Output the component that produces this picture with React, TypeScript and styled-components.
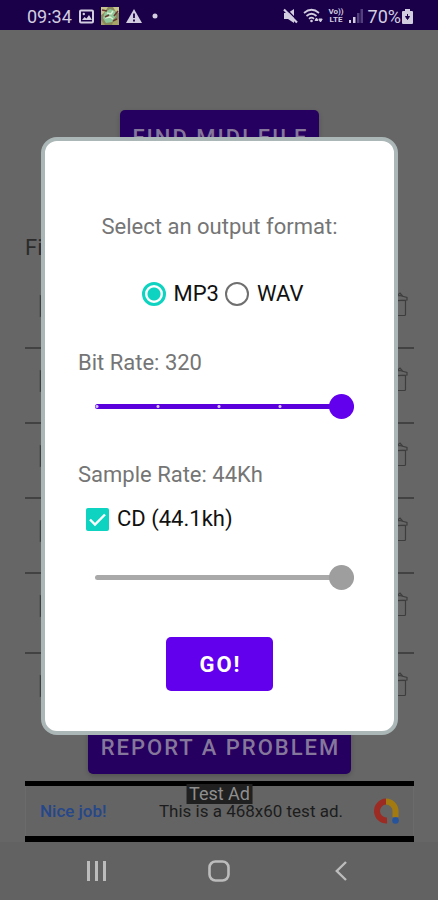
import React, { useState } from "react";
import styled, { createGlobalStyle } from "styled-components";

const GlobalStyle = createGlobalStyle`
  *, *::before, *::after { box-sizing: border-box; }
  body { margin: 0; background: #666; }
  body, button, input { font-family: Roboto, "Liberation Sans", sans-serif; }
`;

const Screen = styled.div`
  min-height: 100vh;
  display: flex;
  flex-direction: column;
  background: #666;
`;

const StatusBar = styled.header`
  height: 30px;
  padding: 2px 25px 0 27px;
  display: flex;
  align-items: center;
  justify-content: space-between;
  background: #190049;
  color: #d3cde0;
  font-size: 18px;
`;

const StatusGroup = styled.div<{ $gap: number }>`
  display: flex;
  align-items: center;
  gap: ${(p) => p.$gap}px;
  svg { display: block; }
`;

const Main = styled.main`
  flex: 1;
  position: relative;
  padding: 80px 24px 0 25px;
  display: flex;
  flex-direction: column;
  align-items: center;
`;

const DimButton = styled.button`
  height: 54px;
  padding: 0 11px 0 13px;
  border: 0;
  border-radius: 5px;
  background: #260060;
  color: #85779b;
  font-size: 22px;
  font-weight: 500;
  letter-spacing: 2px;
  white-space: nowrap;
  box-shadow: 0 2px 5px rgba(0, 0, 0, 0.2);
`;

const FilesHeading = styled.h2`
  align-self: stretch;
  margin: 72px 0 14px;
  font-size: 22px;
  font-weight: 400;
  line-height: 24px;
  color: #2b2b2b;
`;

const FileList = styled.ul`
  align-self: stretch;
  flex: 1;
  margin: 0;
  padding: 0;
  list-style: none;
`;

const FileRow = styled.li<{ $tall?: boolean }>`
  height: ${(p) => (p.$tall ? 80 : 75)}px;
  padding: 18px 6px 0 14px;
  display: flex;
  align-items: flex-start;
  justify-content: space-between;
  border-bottom: 2px solid #424242;
  &:last-child { height: 66px; border-bottom: 0; }
`;

const RowButton = styled.button`
  width: 20px;
  height: 26px;
  padding: 0;
  border: 0;
  background: none;
  color: #3d3d3d;
  svg { display: block; }
`;

const AdBanner = styled.aside`
  align-self: stretch;
  position: relative;
  height: 61px;
  margin-top: 7px;
  padding: 0 15px;
  display: flex;
  align-items: center;
  border: solid #000;
  border-width: 5px 0 6px;
  background: #646464;
  box-shadow: inset 1px 0 #6b6b6b, inset -1px 0 #6b6b6b;
  font-size: 17px;
  line-height: 16px;
  color: #1c1c1c;
  svg { display: block; }
`;

const AdLink = styled.a`
  color: #26478a;
  font-weight: 500;
  text-decoration: none;
`;

const AdText = styled.span`
  margin: 0 30px 0 auto;
`;

const AdTag = styled.span`
  position: absolute;
  top: -2px;
  left: 50%;
  transform: translateX(-50%);
  height: 20px;
  padding: 0 3px;
  background: #202020;
  color: #8e8e8e;
  font-size: 18px;
  line-height: 20px;
  white-space: nowrap;
`;

const Overlay = styled.div`
  position: absolute;
  inset: 0;
  padding: 0 40px 0 41px;
  display: grid;
  align-items: center;
`;

const Dialog = styled.form`
  padding: 72px 33px 40px;
  display: flex;
  flex-direction: column;
  border: 4px solid #abb6b6;
  border-radius: 16px;
  background: #fff;
`;

const FormatGroup = styled.fieldset`
  margin: 0;
  padding: 0;
  border: 0;
`;

const FormatLegend = styled.legend`
  width: 100%;
  margin-bottom: 39px;
  padding: 0;
  text-align: center;
  font-size: 22px;
  line-height: 28px;
  color: #757575;
`;

const FormatChoices = styled.div`
  display: flex;
  justify-content: center;
  gap: 6px;
  padding-left: 6px;
`;

const Choice = styled.label`
  display: flex;
  align-items: center;
  gap: 8px;
  font-size: 22px;
  line-height: 28px;
  color: #111;
`;

const Radio = styled.input`
  appearance: none;
  width: 24px;
  height: 24px;
  margin: 0;
  border: 2px solid #6f6f6f;
  border-radius: 50%;
  &:checked {
    border: 3px solid #0fd3c1;
    background: radial-gradient(circle, #0fd3c1 6px, #fff 7px);
  }
`;

const Field = styled.section`
  display: flex;
  flex-direction: column;
`;

const FieldLabel = styled.label`
  font-size: 22px;
  line-height: 28px;
  color: #757575;
`;

const BitRateField = styled(Field)`
  margin-top: 41px;
  gap: 16px;
`;

const SampleRateField = styled(Field)`
  margin-top: 42px;
`;

const CdChoice = styled(Choice)`
  margin: 16px 0 31px 8px;
`;

const CheckWrap = styled.span`
  display: grid;
  width: 23px;
  height: 23px;
  > * { grid-area: 1 / 1; }
`;

const Checkbox = styled.input`
  appearance: none;
  width: 23px;
  height: 23px;
  margin: 0;
  border: 2px solid #6f6f6f;
  border-radius: 2px;
  &:checked { border: 0; background: #0fd3c1; }
  & + svg { visibility: hidden; pointer-events: none; }
  &:checked + svg { visibility: visible; }
`;

const tick = (at: string) =>
  `radial-gradient(circle at ${at} 50%, #d9c6ff 1px, transparent 2px)`;

const Slider = styled.input<{ $color: string; $track: string; $ticks?: boolean }>`
  appearance: none;
  height: 26px;
  margin: 0 7px 0 17px;
  background: none;
  &::-webkit-slider-runnable-track {
    height: 5px;
    border-radius: 3px;
    background: ${(p) =>
      p.$ticks
        ? `${["2px", "63px", "124px", "185px"].map(tick).join(", ")}, ${p.$track}`
        : p.$track};
  }
  &::-webkit-slider-thumb {
    appearance: none;
    width: 25px;
    height: 25px;
    margin-top: -10px;
    border: 0;
    border-radius: 50%;
    background: ${(p) => p.$color};
  }
`;

const GoButton = styled.button`
  align-self: center;
  height: 54px;
  margin-top: 47px;
  padding: 0 31px 0 33px;
  border: 0;
  border-radius: 5px;
  background: #6200ee;
  color: #fff;
  font-size: 22px;
  font-weight: 700;
  letter-spacing: 2px;
`;

const NavBar = styled.nav`
  height: 58px;
  padding: 0 36px;
  display: grid;
  grid-template-columns: repeat(3, 1fr);
  background: #626262;
`;

const NavButton = styled.button`
  display: grid;
  place-items: center;
  padding: 0;
  border: 0;
  background: none;
  color: #bcbcbc;
`;

const PictureIcon = () => (
  <svg width="15" height="15" viewBox="0 0 15 15">
    <rect x="1" y="1.500" width="13" height="12" rx="1" fill="none" stroke="#d3cde0" strokeWidth="2" />
    <path d="M3 11l2.500-3 2 1.500 2.500-3.500 3 5z" fill="#d3cde0" />
    <circle cx="4.800" cy="5" r="1.200" fill="#d3cde0" />
  </svg>
);

const GameIcon = () => (
  <svg width="18" height="18" viewBox="0 0 18 18">
    <rect width="18" height="18" fill="#8a8a5c" />
    <path d="M0 0h7L3 6 0 8zM12 0h6v6l-3-1z" fill="#c8c58e" />
    <path d="M4 5l5-3 5 2 1 5-4 6-6 1-3-5z" fill="#8fc79a" />
    <path d="M6 6l4 1 2-3M4 11l5-1 3 2" fill="none" stroke="#d9efcf" strokeWidth="1.500" />
    <path d="M1 3l5 1M13 9l4-5M8 8l-4 2M12 14l4-2" stroke="#6b3b32" strokeWidth="1.600" />
    <path d="M0 13l4 5H0zM12 15l6-3v6h-7z" fill="#a9a566" />
  </svg>
);

const WarningIcon = () => (
  <svg width="16" height="14" viewBox="0 0 16 14">
    <path d="M8 0l8 14H0z" fill="#d3cde0" />
    <path d="M8 4.500v4.500M8 10.500v2" stroke="#190049" strokeWidth="1.800" />
  </svg>
);

const DotIcon = () => (
  <svg width="10" height="6" viewBox="0 0 10 6">
    <circle cx="6" cy="3" r="2.500" fill="#d3cde0" />
  </svg>
);

const MuteIcon = () => (
  <svg width="15" height="16" viewBox="0 0 15 16">
    <path d="M1 5h4l6-4v14l-6-4H1z" fill="#d3cde0" />
    <path d="M2 0l14 14" stroke="#190049" strokeWidth="1.500" />
    <path d="M1 1.500l13 13" stroke="#d3cde0" strokeWidth="2.200" />
  </svg>
);

const WifiIcon = () => (
  <svg width="20" height="16" viewBox="0 0 20 16">
    <g fill="none" stroke="#d3cde0" strokeWidth="1.700">
      <path d="M1 5q7.500-6.500 15 0" />
      <path d="M3.500 8q5-4.500 10 0" />
      <path d="M6 10.800q2.500-2.200 5 0" />
    </g>
    <circle cx="8.500" cy="13" r="1.300" fill="#d3cde0" />
    <path d="M12 12.500l1.500-2.500 1.500 2.500zM15.800 11l1.700 3 1.700-3z" stroke="#d3cde0" fill="#d3cde0" />
  </svg>
);

const VolteMark = styled.span`
  display: grid;
  font-size: 8px;
  font-weight: 700;
  line-height: 8px;
  text-align: center;
`;

const SignalIcon = () => (
  <svg width="14" height="14" viewBox="0 0 14 14">
    <path d="M0 11h2v3H0zM4 8h2.500v6H4z" fill="#d3cde0" />
    <path d="M8 4h2.500v10H8zM11.500 0H14v14h-2.500z" fill="#523f7d" />
  </svg>
);

const BatteryIcon = () => (
  <svg width="11" height="15" viewBox="0 0 11 15">
    <path d="M3 0h5v2h2q1 0 1 1v11q0 1-1 1H1q-1 0-1-1V3q0-1 1-1h2z" fill="#d3cde0" />
    <path d="M5.500 5v4M3.500 7.500l2 3 2-3z" stroke="#190049" fill="#190049" />
  </svg>
);

const PlayIcon = () => (
  <svg width="20" height="26" viewBox="0 0 20 26">
    <path d="M1.500 4v20L18 14z" fill="none" stroke="currentColor" strokeWidth="1.500" />
  </svg>
);

const TrashIcon = () => (
  <svg width="20" height="26" viewBox="0 0 20 26">
    <g fill="none" stroke="currentColor" strokeWidth="1.200">
      <path d="M1 4.500L12 3.500l7 2v2.500L2 9z" />
      <path d="M9 3.500l3-2.500 2.500 3" />
      <path d="M3 9v13.500q0 1 1 1h12.500q1 0 1-1V8" />
      <path d="M10 8.500h7" />
    </g>
  </svg>
);

const AdLogo = () => (
  <svg width="26" height="26" viewBox="0 0 26 26">
    <path d="M14 22.500A9.300 9.300 0 1 1 13 3.500" fill="none" stroke="#9c2b23" strokeWidth="6" />
    <path d="M13 3.500A9.500 9.500 0 0 1 22.500 13v6" fill="none" stroke="#a37a10" strokeWidth="6" />
    <circle cx="22.500" cy="22.500" r="3.300" fill="#25549c" />
  </svg>
);

const CheckIcon = () => (
  <svg width="23" height="23" viewBox="0 0 23 23">
    <path d="M4 11.500l5 5L19 6.500" fill="none" stroke="#fff" strokeWidth="2.400" />
  </svg>
);

const RecentsIcon = () => (
  <svg width="22" height="20" viewBox="0 0 22 20">
    <path d="M2.500 0v20M10.500 0v20M18.500 0v20" stroke="currentColor" strokeWidth="3" />
  </svg>
);

const HomeIcon = () => (
  <svg width="22" height="22" viewBox="0 0 22 22">
    <rect x="1.500" y="1.500" width="19" height="19" rx="6" fill="none" stroke="currentColor" strokeWidth="2.600" />
  </svg>
);

const BackIcon = () => (
  <svg width="12" height="20" viewBox="0 0 12 20">
    <path d="M11 1L1.800 10 11 19" fill="none" stroke="currentColor" strokeWidth="2.400" />
  </svg>
);

const files = [1, 2, 3, 4, 5, 6];
const bitRates = [64, 128, 192, 256, 320];

export default function App() {
  const [format, setFormat] = useState("MP3");
  const [bitRate, setBitRate] = useState(4);
  const [cd, setCd] = useState(true);
  const [sampleRate, setSampleRate] = useState(44);

  return (
    <Screen>
      <GlobalStyle />
      <StatusBar>
        <StatusGroup $gap={7}>
          <span>09:34</span>
          <PictureIcon />
          <GameIcon />
          <WarningIcon />
          <DotIcon />
        </StatusGroup>
        <StatusGroup $gap={5}>
          <MuteIcon />
          <WifiIcon />
          <VolteMark>
            <span>Vo))</span>
            <span>LTE</span>
          </VolteMark>
          <SignalIcon />
          <StatusGroup $gap={1}>
            <span>70%</span>
            <BatteryIcon />
          </StatusGroup>
        </StatusGroup>
      </StatusBar>

      <Main>
        <DimButton type="button">FIND MIDI FILE</DimButton>
        <FilesHeading>Files</FilesHeading>
        <FileList>
          {files.map((n) => (
            <FileRow key={n} $tall={n === 5}>
              <RowButton type="button" aria-label="Play"><PlayIcon /></RowButton>
              <RowButton type="button" aria-label="Delete"><TrashIcon /></RowButton>
            </FileRow>
          ))}
        </FileList>
        <DimButton type="button">REPORT A PROBLEM</DimButton>
        <AdBanner>
          <AdLink href="#ad">Nice job!</AdLink>
          <AdText>This is a 468x60 test ad.</AdText>
          <AdLogo />
          <AdTag>Test Ad</AdTag>
        </AdBanner>

        <Overlay>
          <Dialog role="dialog" aria-label="Output format" onSubmit={(e) => e.preventDefault()}>
            <FormatGroup>
              <FormatLegend>Select an output format:</FormatLegend>
              <FormatChoices>
                {["MP3", "WAV"].map((f) => (
                  <Choice key={f}>
                    <Radio type="radio" name="format" value={f} checked={format === f} onChange={() => setFormat(f)} />
                    {f}
                  </Choice>
                ))}
              </FormatChoices>
            </FormatGroup>
            <BitRateField>
              <FieldLabel htmlFor="bitrate">Bit Rate: {bitRates[bitRate]}</FieldLabel>
              <Slider
                id="bitrate" type="range" min={0} max={4} value={bitRate}
                onChange={(e) => setBitRate(Number(e.target.value))}
                $color="#6200ee" $track="#5a00dc" $ticks
              />
            </BitRateField>
            <SampleRateField>
              <FieldLabel htmlFor="samplerate">Sample Rate: {sampleRate}Kh</FieldLabel>
              <CdChoice>
                <CheckWrap>
                  <Checkbox type="checkbox" checked={cd} onChange={(e) => setCd(e.target.checked)} />
                  <CheckIcon />
                </CheckWrap>
                CD (44.1kh)
              </CdChoice>
              <Slider
                id="samplerate" type="range" min={8} max={44} value={sampleRate} disabled={cd}
                onChange={(e) => setSampleRate(Number(e.target.value))}
                $color="#9e9e9e" $track="#a9a9a9"
              />
            </SampleRateField>
            <GoButton type="submit">GO!</GoButton>
          </Dialog>
        </Overlay>
      </Main>

      <NavBar>
        <NavButton type="button" aria-label="Recent apps"><RecentsIcon /></NavButton>
        <NavButton type="button" aria-label="Home"><HomeIcon /></NavButton>
        <NavButton type="button" aria-label="Back"><BackIcon /></NavButton>
      </NavBar>
    </Screen>
  );
}
